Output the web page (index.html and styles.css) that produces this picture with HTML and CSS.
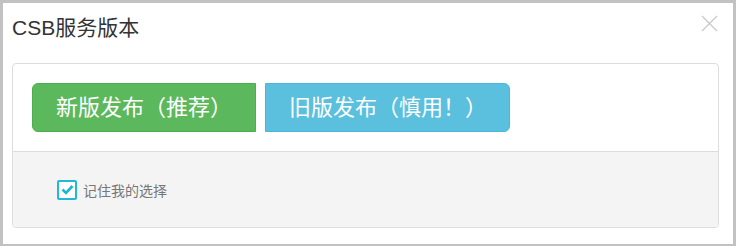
FILE: index.html
```html
<!DOCTYPE html>
<html lang="zh-CN">
<head>
  <meta charset="UTF-8">
  <meta name="viewport" content="width=device-width, initial-scale=1.0">
  <title>CSB服务版本</title>
  <link rel="stylesheet" href="styles.css">
</head>
<body>
  <div class="modal">
    <div class="modal-header">
      <h4 class="modal-title">CSB服务版本</h4>
      <span class="close">
        <svg width="17" height="17" viewBox="0 0 17 17">
          <path d="M1 1L16 16M16 1L1 16" stroke="#c8c8c8" stroke-width="1.3" fill="none"/>
        </svg>
      </span>
    </div>
    <div class="panel">
      <div class="panel-body">
        <div class="btn-group">
          <button class="btn btn-success">新版发布（推荐）</button>
          <button class="btn btn-info">旧版发布（慎用！）</button>
        </div>
      </div>
      <div class="panel-footer">
        <label class="remember">
          <span class="check">
            <svg width="13" height="11" viewBox="0 0 13 11">
              <path d="M1.5 5.5L5 9L11.5 2" stroke="#1fb3d6" stroke-width="2.6" fill="none"/>
            </svg>
          </span>
          记住我的选择
        </label>
      </div>
    </div>
  </div>
</body>
</html>
```

FILE: styles.css
```css
body {
  margin: 0;
  background-color: #c2c2c2;
  font-family: "Liberation Sans", "Noto Sans CJK SC", sans-serif;
}
.modal {
  margin: 3px 3px 2px 3px;
  height: 241px;
  background-color: #fff;
  box-sizing: border-box;
  padding: 0 14px 0 9px;
}
.modal-header {
  display: flex;
  justify-content: space-between;
  padding: 10px 1px 20px 0;
}
.modal-title {
  margin: 0;
  font-size: 21px;
  line-height: 30px;
  font-weight: normal;
  color: #333;
}
.close {
  margin-top: 2px;
  height: 17px;
}
.panel {
  border: 1px solid #dddddd;
  border-radius: 4px;
  overflow: hidden;
}
.panel-body {
  padding: 19px 19px;
  border-bottom: 1px solid #dddddd;
}
.btn-group {
  display: flex;
  gap: 9px;
}
.btn {
  font-family: "Liberation Sans", "Noto Sans CJK SC", sans-serif;
  font-size: 22px;
  line-height: 29px;
  padding: 9px 23px;
  color: #fff;
  border: 1px solid transparent;
  cursor: pointer;
}
.btn-success {
  background-color: #5cb85c;
  border-color: #4cae4c;
  border-radius: 6px 0 0 6px;
}
.btn-info {
  background-color: #5bc0de;
  border-color: #46b8da;
  border-radius: 0 6px 6px 0;
  padding-right: 22px;
}
.panel-footer {
  background-color: #f4f4f4;
  height: 75px;
  padding-left: 44px;
  display: flex;
  align-items: center;
}
.remember {
  display: flex;
  align-items: center;
  font-size: 14px;
  color: #777;
}
.check {
  width: 16px;
  height: 16px;
  border: 2px solid #22b8da;
  border-radius: 2px;
  background-color: #fff;
  display: flex;
  align-items: center;
  justify-content: center;
  margin-right: 6px;
}
```
